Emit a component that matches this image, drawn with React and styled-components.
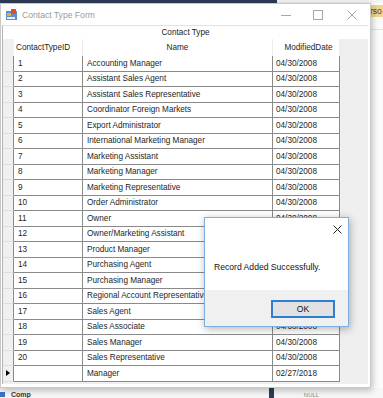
import React from 'react';
import styled, { createGlobalStyle } from 'styled-components';

const rows = [
  ['1', 'Accounting Manager', '04/30/2008'],
  ['2', 'Assistant Sales Agent', '04/30/2008'],
  ['3', 'Assistant Sales Representative', '04/30/2008'],
  ['4', 'Coordinator Foreign Markets', '04/30/2008'],
  ['5', 'Export Administrator', '04/30/2008'],
  ['6', 'International Marketing Manager', '04/30/2008'],
  ['7', 'Marketing Assistant', '04/30/2008'],
  ['8', 'Marketing Manager', '04/30/2008'],
  ['9', 'Marketing Representative', '04/30/2008'],
  ['10', 'Order Administrator', '04/30/2008'],
  ['11', 'Owner', '04/30/2008'],
  ['12', 'Owner/Marketing Assistant', '04/30/2008'],
  ['13', 'Product Manager', '04/30/2008'],
  ['14', 'Purchasing Agent', '04/30/2008'],
  ['15', 'Purchasing Manager', '04/30/2008'],
  ['16', 'Regional Account Representative', '04/30/2008'],
  ['17', 'Sales Agent', '04/30/2008'],
  ['18', 'Sales Associate', '04/30/2008'],
  ['19', 'Sales Manager', '04/30/2008'],
  ['20', 'Sales Representative', '04/30/2008'],
  ['', 'Manager', '02/27/2018', true],
];

const App = () => {
  return (
    <>
      <GlobalStyle />
      <Page>
        <TopStrip>
          <NavyBar />
        </TopStrip>

        <Window>
          <TitleBar>
            <AppIcon width="11" height="11" viewBox="0 0 11 11">
              <rect x="0" y="2" width="11" height="9" fill="#5b8fd0" />
              <rect x="1" y="4" width="4" height="3" fill="#e8b030" />
              <rect x="5" y="0" width="5" height="5" fill="#d9502e" />
              <rect x="1" y="8" width="8" height="2" fill="#e9eef6" />
            </AppIcon>
            <Title>Contact Type Form</Title>
            <Controls>
              <CtrlBtn>
                <svg width="10" height="10" viewBox="0 0 10 10">
                  <line x1="0" y1="5.5" x2="10" y2="5.5" stroke="#a6a6a6" strokeWidth="1" />
                </svg>
              </CtrlBtn>
              <CtrlBtn>
                <svg width="10" height="10" viewBox="0 0 10 10">
                  <rect x="0.5" y="0.5" width="9" height="9" fill="none" stroke="#a6a6a6" strokeWidth="1" />
                </svg>
              </CtrlBtn>
              <CtrlBtn>
                <svg width="10" height="10" viewBox="0 0 10 10">
                  <path d="M0.5 0.5 L9.5 9.5 M9.5 0.5 L0.5 9.5" stroke="#a6a6a6" strokeWidth="1" />
                </svg>
              </CtrlBtn>
            </Controls>
          </TitleBar>

          <Client>
            <DataGrid>
              <Caption>Contact Type</Caption>
              <GridBody>
                <HeaderRow>
                  <RowHead $header />
                  <HeadCell $w={69} $align="left">ContactTypeID</HeadCell>
                  <HeadCell $w={190} $align="center">Name</HeadCell>
                  <HeadCell $w={67} $align="center" $shift={5}>ModifiedDate</HeadCell>
                </HeaderRow>
                {rows.map(([id, name, date, current], i) => (
                  <Row key={i}>
                    <RowHead>{current && <Arrow />}</RowHead>
                    <Cell $w={69}>{id}</Cell>
                    <Cell $w={190}>{name}</Cell>
                    <Cell $w={67} $pad={3}>{date}</Cell>
                  </Row>
                ))}
              </GridBody>
            </DataGrid>
          </Client>

          <Dialog>
            <DialogTop>
              <DialogClose>
                <svg width="9" height="9" viewBox="0 0 9 9">
                  <path d="M0.5 0.5 L8.5 8.5 M8.5 0.5 L0.5 8.5" stroke="#222" strokeWidth="1" />
                </svg>
              </DialogClose>
              <Message>Record Added Successfully.</Message>
            </DialogTop>
            <DialogFooter>
              <OkButton>OK</OkButton>
            </DialogFooter>
          </Dialog>
        </Window>

        <SidePanel>
          <Tab>rso</Tab>
          <SideLine />
        </SidePanel>

        <BottomStrip>
          <BlueIcon />
          <BehindText>Comp</BehindText>
          <NavyStub />
          <NullText>NULL</NullText>
        </BottomStrip>
      </Page>
    </>
  );
};

export default App;

const GlobalStyle = createGlobalStyle`
  html, body {
    margin: 0;
    padding: 0;
    background: #ffffff;
    overflow: hidden;
  }
  * { box-sizing: border-box; }
`;

const Page = styled.div`
  width: 383px;
  height: 398px;
  display: grid;
  grid-template-columns: 371px 12px;
  grid-template-rows: 3px 385px 10px;
  font-family: "Liberation Sans", Arial, sans-serif;
  background: #fbfbfb;
  overflow: hidden;
`;

const TopStrip = styled.div`
  grid-column: 1 / 3;
  display: flex;
  background: #f4f4f4;
`;

const NavyBar = styled.div`
  width: 277px;
  height: 3px;
  background: #2f3b57;
`;

const Window = styled.div`
  position: relative;
  z-index: 1;
  display: flex;
  flex-direction: column;
  background: #ffffff;
  border: 1px solid #c9c9c9;
  box-shadow: 1px 2px 7px rgba(0, 0, 0, 0.28);
`;

const TitleBar = styled.div`
  height: 21px;
  display: flex;
  align-items: center;
  padding-left: 5px;
  background: #ffffff;
`;

const AppIcon = styled.svg`
  flex: none;
  margin-right: 5px;
`;

const Title = styled.div`
  flex: 1;
  font-size: 8.6px;
  color: #9a9a9a;
`;

const Controls = styled.div`
  display: flex;
  height: 100%;
`;

const CtrlBtn = styled.div`
  width: 32px;
  height: 100%;
  display: flex;
  align-items: center;
  justify-content: center;
  &:last-child { width: 36px; }
`;

const Client = styled.div`
  flex: 1;
  display: flex;
  padding: 0 2px 3px 1px;
  background: #ffffff;
`;

const DataGrid = styled.div`
  flex: 1;
  display: flex;
  flex-direction: column;
  border-left: 1px solid #b5b5b5;
  border-top: 1px solid #e3e3e3;
`;

const Caption = styled.div`
  height: 13px;
  display: flex;
  align-items: center;
  justify-content: center;
  font-size: 8.2px;
  color: #1a1a1a;
  background: #ffffff;
`;

const GridBody = styled.div`
  flex: 1;
  background: #efefef;
  display: flex;
  flex-direction: column;
`;

const HeaderRow = styled.div`
  display: flex;
  height: 17px;
`;

const HeadCell = styled.div`
  width: ${p => p.$w}px;
  display: flex;
  align-items: center;
  justify-content: ${p => (p.$align === 'left' ? 'flex-start' : 'center')};
  padding-left: ${p => (p.$align === 'left' ? 2 : p.$shift || 0)}px;
  font-size: 8.2px;
  color: #1e1e1e;
  background: #ffffff;
  border-right: 1px solid #ececec;
  white-space: nowrap;
`;

const Row = styled.div`
  display: flex;
  height: 15.5px;
`;

const RowHead = styled.div`
  width: 11px;
  flex: none;
  display: flex;
  align-items: center;
  justify-content: center;
  background: #f0f0f0;
  border-right: 1px solid ${p => (p.$header ? '#f0f0f0' : '#8a8a8a')};
  border-bottom: 1px solid ${p => (p.$header ? '#f0f0f0' : '#dedede')};
`;

const Arrow = styled.div`
  width: 0;
  height: 0;
  border-top: 3.5px solid transparent;
  border-bottom: 3.5px solid transparent;
  border-left: 4px solid #000;
`;

const Cell = styled.div`
  width: ${p => p.$w}px;
  flex: none;
  display: flex;
  align-items: center;
  padding-left: ${p => p.$pad || 4}px;
  font-size: 8.2px;
  color: #1e1e1e;
  background: #ffffff;
  border-right: 1px solid #8a8a8a;
  border-bottom: 1px solid #8a8a8a;
  white-space: nowrap;
  overflow: hidden;
`;

const Dialog = styled.div`
  position: absolute;
  left: 203px;
  top: 213px;
  width: 145px;
  height: 110px;
  display: flex;
  flex-direction: column;
  background: #ffffff;
  border: 1px solid #7eaee0;
  box-shadow: 1px 2px 8px rgba(0, 0, 0, 0.3);
`;

const DialogTop = styled.div`
  position: relative;
  height: 72px;
  display: flex;
  align-items: flex-end;
  padding: 0 0 18px 9px;
`;

const DialogClose = styled.div`
  position: absolute;
  right: 6px;
  top: 7px;
  display: flex;
`;

const Message = styled.div`
  font-size: 8.6px;
  color: #111;
  white-space: nowrap;
`;

const DialogFooter = styled.div`
  flex: 1;
  display: flex;
  justify-content: flex-end;
  align-items: flex-start;
  padding: 10px 13px 0 0;
  background: #f0f0f0;
`;

const OkButton = styled.button`
  width: 64px;
  height: 18px;
  padding: 0;
  font-family: "Liberation Sans", Arial, sans-serif;
  font-size: 8.6px;
  color: #111;
  background: #e1e1e1;
  border: 2px solid #2f7fd0;
`;

const SidePanel = styled.div`
  display: flex;
  flex-direction: column;
  padding-top: 2px;
  background: #fbfbfb;
`;

const Tab = styled.div`
  height: 12px;
  background: #f3d48f;
  font-size: 8.5px;
  line-height: 12px;
  color: #3a3a3a;
  overflow: hidden;
  white-space: nowrap;
  text-indent: -1px;
`;

const SideLine = styled.div`
  margin-top: 12px;
  height: 1px;
  background: #e2e2e2;
`;

const BottomStrip = styled.div`
  grid-column: 1 / 3;
  display: flex;
  align-items: flex-end;
  background: #f7f7f7;
`;

const BlueIcon = styled.div`
  width: 5px;
  height: 5px;
  margin-bottom: 1px;
  background: #3a73c4;
`;

const BehindText = styled.div`
  margin-left: 6px;
  font-size: 7px;
  font-weight: bold;
  color: #333;
  line-height: 7px;
`;

const NavyStub = styled.div`
  margin-left: 238px;
  width: 5px;
  height: 10px;
  background: #2f3b57;
`;

const NullText = styled.div`
  margin-left: 30px;
  font-size: 6px;
  color: #888;
  line-height: 6px;
`;
